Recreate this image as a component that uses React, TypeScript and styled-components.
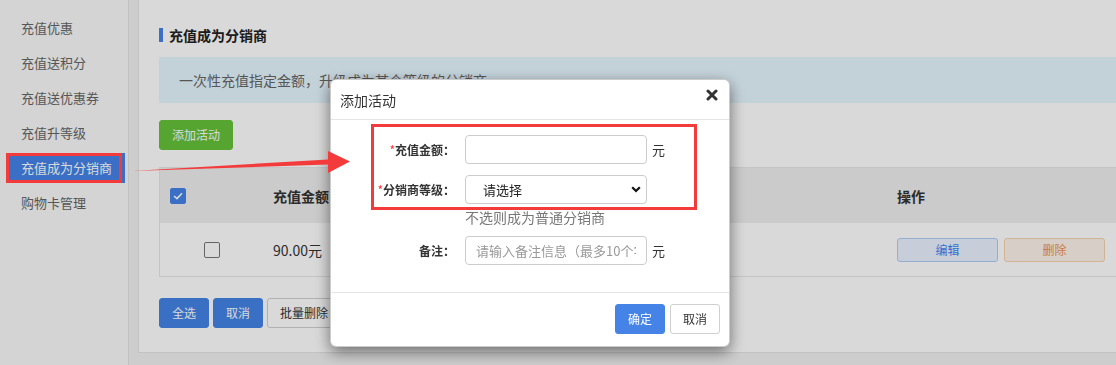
import React from "react";
import styled, { createGlobalStyle } from "styled-components";

const GlobalStyle = createGlobalStyle`
  html, body { margin: 0; padding: 0; background: #f1f1f1; overflow: hidden; }
  body { font-family: "Noto Sans CJK SC", "Microsoft YaHei", sans-serif; color: #333; }
  * { box-sizing: border-box; }
`;

const Page = styled.div`
  display: flex;
  width: 1142px;
  height: 365px;
  background: #f1f1f1;
`;

const Sidebar = styled.nav`
  flex: none;
  width: 129px;
  height: 100%;
  background: #f9f9f9;
  border-right: 1px solid #e4e4e4;
  padding: 13px 3px 0 8px;
  display: flex;
  flex-direction: column;
  gap: 5px;
`;

const NavItem = styled.div<{ $active?: boolean }>`
  height: 30px;
  line-height: 30px;
  padding-left: 13px;
  font-size: 13px;
  color: ${(p) => (p.$active ? "#fff" : "#666")};
  background: ${(p) => (p.$active ? "#4583e8" : "transparent")};
`;

const Main = styled.main`
  flex: none;
  padding-left: 9px;
`;

const Panel = styled.section`
  width: 1004px;
  height: 353px;
  background: #fff;
  border: 1px solid #e4e4e4;
  border-top: none;
  padding: 25px 20px 0 20px;
  display: flex;
  flex-direction: column;
  align-items: flex-start;
`;

const Title = styled.h2`
  margin: 0;
  height: 20px;
  display: flex;
  align-items: center;
  font-size: 14px;
  font-weight: bold;
  color: #222;
  &::before {
    content: "";
    width: 4px;
    height: 14px;
    background: #4583e8;
    margin-right: 6px;
  }
`;

const InfoBox = styled.div`
  margin-top: 12px;
  align-self: stretch;
  height: 46px;
  line-height: 46px;
  background: #e6f7ff;
  padding-left: 20px;
  font-size: 14px;
  color: #666;
  white-space: nowrap;
`;

const Btn = styled.button<{ $variant?: "green" | "blue" | "white" }>`
  height: 30px;
  padding: 0 12px;
  border-radius: 3px;
  font-family: inherit;
  font-size: 12px;
  line-height: 28px;
  cursor: pointer;
  white-space: nowrap;
  background: ${(p) =>
    p.$variant === "green" ? "#67c23a" : p.$variant === "blue" ? "#4584e6" : "#fff"};
  color: ${(p) => (p.$variant === "white" ? "#333" : "#fff")};
  border: 1px solid
    ${(p) =>
      p.$variant === "green" ? "#67c23a" : p.$variant === "blue" ? "#4584e6" : "#d0d0d0"};
`;

const AddBtn = styled(Btn)`
  margin-top: 17px;
`;

const Table = styled.div`
  margin-top: 17px;
  width: 962px;
  border: 1px solid #e8e8e8;
`;

const TRow = styled.div<{ $head?: boolean }>`
  display: grid;
  grid-template-columns: 104px 208px 208px 208px 232px;
  align-items: center;
  height: ${(p) => (p.$head ? "55px" : "53px")};
  background: ${(p) => (p.$head ? "#efefef" : "#fff")};
  font-size: 14px;
  font-weight: ${(p) => (p.$head ? "bold" : "normal")};
  color: #333;
`;

const Cell = styled.div<{ $center?: boolean }>`
  padding-left: ${(p) => (p.$center ? "0" : "9px")};
  display: flex;
  align-items: center;
  justify-content: ${(p) => (p.$center ? "center" : "flex-start")};
  gap: 6px;
  white-space: nowrap;
`;

const HeadCheckCell = styled.div`
  padding-left: 10px;
  display: flex;
  align-items: center;
`;

const Check = styled.span<{ $checked?: boolean }>`
  width: 16px;
  height: 16px;
  border-radius: 2px;
  display: inline-flex;
  align-items: center;
  justify-content: center;
  background: ${(p) => (p.$checked ? "#4583e8" : "#fff")};
  border: 1px solid ${(p) => (p.$checked ? "#4583e8" : "#767676")};
`;

const RowBtn = styled.button<{ $tone: "blue" | "orange" }>`
  width: 101px;
  height: 24px;
  border-radius: 3px;
  font-family: inherit;
  font-size: 12px;
  padding: 0;
  cursor: pointer;
  background: ${(p) => (p.$tone === "blue" ? "#ecf3ff" : "#fcf3ea")};
  color: ${(p) => (p.$tone === "blue" ? "#3f85f2" : "#f0904a")};
  border: 1px solid ${(p) => (p.$tone === "blue" ? "#b0cdf5" : "#f5d2ae")};
`;

const Actions = styled.div`
  margin-top: 21px;
  display: flex;
  gap: 4px;
`;

const Backdrop = styled.div`
  position: fixed;
  inset: 0;
  background: rgba(0, 0, 0, 0.15);
`;

const Modal = styled.div`
  position: fixed;
  left: 330px;
  top: 79px;
  width: 400px;
  background: #fff;
  border: 1px solid rgba(0, 0, 0, 0.2);
  border-radius: 6px;
  box-shadow: 0 5px 15px rgba(0, 0, 0, 0.5);
  display: flex;
  flex-direction: column;
`;

const ModalHeader = styled.div`
  height: 40px;
  border-bottom: 1px solid #e5e5e5;
  padding: 0 11px 0 9px;
  display: flex;
  align-items: center;
  justify-content: space-between;
`;

const ModalTitle = styled.span`
  font-size: 14px;
  color: #333;
`;

const CloseBtn = styled.button`
  border: none;
  background: transparent;
  padding: 0;
  width: 12px;
  height: 12px;
  display: flex;
  align-items: center;
  justify-content: center;
  cursor: pointer;
  margin-top: -9px;
`;

const ModalBody = styled.div`
  padding: 15px 0 27px 0;
  display: flex;
  flex-direction: column;
`;

const FormRow = styled.div<{ $gap?: number }>`
  display: grid;
  grid-template-columns: 134px 182px auto;
  align-items: center;
  margin-top: ${(p) => p.$gap ?? 0}px;
`;

const Label = styled.label`
  text-align: right;
  padding-right: 10px;
  font-size: 12px;
  font-weight: bold;
  color: #333;
  white-space: nowrap;
`;

const Req = styled.span`
  color: #f33;
  font-weight: normal;
`;

const TextInput = styled.input`
  width: 182px;
  height: 29px;
  border: 1px solid #ccc;
  border-radius: 4px;
  padding: 0 10px;
  font-family: inherit;
  font-size: 13px;
  color: #333;
  outline: none;
  &::placeholder { color: #999; }
`;

const SelectWrap = styled.div`
  position: relative;
  width: 182px;
  height: 29px;
`;

const Select = styled.select`
  appearance: none;
  width: 100%;
  height: 100%;
  border: 1px solid #ccc;
  border-radius: 4px;
  padding: 0 0 0 17px;
  font-family: inherit;
  font-size: 13px;
  color: #222;
  background: #fff;
  outline: none;
`;

const Chevron = styled.svg`
  position: absolute;
  right: 6px;
  top: 11px;
  pointer-events: none;
`;

const Unit = styled.span`
  padding-left: 5px;
  font-size: 13px;
  color: #333;
`;

const Hint = styled.div`
  margin: 4px 0 0 134px;
  line-height: 18px;
  font-size: 14px;
  color: #777;
`;

const ModalFooter = styled.div`
  border-top: 1px solid #e5e5e5;
  padding: 11px 9px 12px;
  display: flex;
  justify-content: flex-end;
  gap: 5px;
`;

const Annotations = styled.svg`
  position: fixed;
  left: 0;
  top: 0;
  pointer-events: none;
`;

const navItems = ["充值优惠", "充值送积分", "充值送优惠券", "充值升等级", "充值成为分销商", "购物卡管理"];

export default function App() {
  return (
    <>
      <GlobalStyle />
      <Page>
        <Sidebar>
          {navItems.map((n) => (
            <NavItem key={n} $active={n === "充值成为分销商"}>
              {n}
            </NavItem>
          ))}
        </Sidebar>
        <Main>
          <Panel>
            <Title>充值成为分销商</Title>
            <InfoBox>一次性充值指定金额，升级成为某个等级的分销商</InfoBox>
            <AddBtn $variant="green">添加活动</AddBtn>
            <Table>
              <TRow $head>
                <HeadCheckCell>
                  <Check $checked>
                    <svg width="10" height="8" viewBox="0 0 10 8">
                      <path d="M1 4 L4 6.6 L9 1.2" fill="none" stroke="#fff" strokeWidth="1.6" />
                    </svg>
                  </Check>
                </HeadCheckCell>
                <Cell>充值金额</Cell>
                <Cell>分销商等级</Cell>
                <Cell>备注</Cell>
                <Cell>操作</Cell>
              </TRow>
              <TRow>
                <Cell $center>
                  <Check />
                </Cell>
                <Cell>90.00元</Cell>
                <Cell>普通分销商</Cell>
                <Cell></Cell>
                <Cell>
                  <RowBtn $tone="blue">编辑</RowBtn>
                  <RowBtn $tone="orange">删除</RowBtn>
                </Cell>
              </TRow>
            </Table>
            <Actions>
              <Btn $variant="blue">全选</Btn>
              <Btn $variant="blue">取消</Btn>
              <Btn $variant="white">批量删除</Btn>
            </Actions>
          </Panel>
        </Main>
      </Page>

      <Backdrop />

      <Modal>
        <ModalHeader>
          <ModalTitle>添加活动</ModalTitle>
          <CloseBtn aria-label="关闭">
            <svg width="12" height="12" viewBox="0 0 12 12">
              <path d="M2 2 L10 10 M10 2 L2 10" stroke="#333" strokeWidth="3" strokeLinecap="round" />
            </svg>
          </CloseBtn>
        </ModalHeader>
        <ModalBody>
          <FormRow>
            <Label>
              <Req>*</Req>充值金额：
            </Label>
            <TextInput />
            <Unit>元</Unit>
          </FormRow>
          <FormRow $gap={11}>
            <Label>
              <Req>*</Req>分销商等级：
            </Label>
            <SelectWrap>
              <Select defaultValue="">
                <option value="">请选择</option>
              </Select>
              <Chevron width="10" height="7" viewBox="0 0 10 7">
                <path d="M1.2 1.2 L5 5 L8.8 1.2" fill="none" stroke="#111" strokeWidth="2.2" />
              </Chevron>
            </SelectWrap>
          </FormRow>
          <Hint>不选则成为普通分销商</Hint>
          <FormRow $gap={10}>
            <Label>备注：</Label>
            <TextInput placeholder="请输入备注信息（最多10个字）" />
            <Unit>元</Unit>
          </FormRow>
        </ModalBody>
        <ModalFooter>
          <Btn $variant="blue">确定</Btn>
          <Btn $variant="white">取消</Btn>
        </ModalFooter>
      </Modal>

      <Annotations width="1116" height="365" viewBox="0 0 1116 365">
        <rect x="7.5" y="154.5" width="113" height="27" fill="none" stroke="#f43b3b" strokeWidth="3" />
        <rect x="372.5" y="125.5" width="323" height="83" fill="none" stroke="#f43b3b" strokeWidth="3" />
        <polygon points="132,171 328,159.5 328,151 350,161.5 328,173 328,164.5" fill="#f43b3b" />
      </Annotations>
    </>
  );
}
